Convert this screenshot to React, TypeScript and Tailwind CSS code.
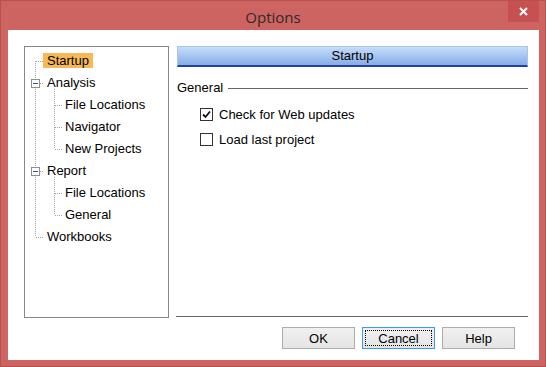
import React from "react";

const tree = [
  { label: "Startup", level: 0, selected: true },
  { label: "Analysis", level: 0 },
  { label: "File Locations", level: 1 },
  { label: "Navigator", level: 1 },
  { label: "New Projects", level: 1 },
  { label: "Report", level: 0 },
  { label: "File Locations", level: 1 },
  { label: "General", level: 1 },
  { label: "Workbooks", level: 0 },
];

function TreeLines() {
  const rowY = (i: number) => 14 + i * 22;
  const dots = "#a0a0a0";
  return (
    <svg className="absolute left-0 top-0 pointer-events-none" width="145" height="272">
      <g stroke={dots} strokeWidth="1" strokeDasharray="1 1" shapeRendering="crispEdges">
        {/* root spine */}
        <line x1="10.5" y1={rowY(0)} x2="10.5" y2={rowY(8)} />
        {[0, 8].map((i) => (
          <line key={i} x1="11" y1={rowY(i) + 0.5} x2="19" y2={rowY(i) + 0.5} />
        ))}
        {[1, 5].map((i) => (
          <line key={i} x1="15" y1={rowY(i) + 0.5} x2="19" y2={rowY(i) + 0.5} />
        ))}
        {/* children */}
        <line x1="29.5" y1={rowY(1) + 6} x2="29.5" y2={rowY(4)} />
        <line x1="29.5" y1={rowY(5) + 6} x2="29.5" y2={rowY(7)} />
        {[2, 3, 4, 6, 7].map((i) => (
          <line key={i} x1="30" y1={rowY(i) + 0.5} x2="38" y2={rowY(i) + 0.5} />
        ))}
      </g>
      {[1, 5].map((i) => (
        <g key={i} shapeRendering="crispEdges">
          <rect x="6.5" y={rowY(i) - 3.5} width="8" height="8" fill="#fff" stroke="#8e8f8f" />
          <line x1="8" y1={rowY(i) + 0.5} x2="13" y2={rowY(i) + 0.5} stroke="#2f5a8a" />
        </g>
      ))}
    </svg>
  );
}

function Checkbox({ checked, label }: { checked?: boolean; label: string }) {
  return (
    <div className="flex items-center h-[25px]">
      <div className="w-[13px] h-[13px] border border-[#333333] bg-white flex items-center justify-center">
        {checked && (
          <svg width="9" height="9" viewBox="0 0 9 9">
            <path d="M1 4.5 L3.5 7 L8 1.5" fill="none" stroke="#111" strokeWidth="1.8" />
          </svg>
        )}
      </div>
      <span className="ml-[6px]">{label}</span>
    </div>
  );
}

function DialogButton({ label, focused }: { label: string; focused?: boolean }) {
  return (
    <button
      className={
        "w-[73px] h-[22px] bg-gradient-to-b from-[#f0f0f0] to-[#e5e5e5] border p-[2px] flex " +
        (focused ? "border-[#3c9bf0]" : "border-[#acacac]")
      }
    >
      <span
        className={
          "flex-1 flex items-center justify-center leading-none " +
          (focused ? "border border-dotted border-black" : "border border-transparent")
        }
      >
        {label}
      </span>
    </button>
  );
}

export default function App() {
  return (
    <div
      className="w-[546px] h-[367px] bg-[#ce6461] border border-[#b5514e] flex flex-col text-[13px] text-black"
      style={{ fontFamily: '"Liberation Sans", Arial, sans-serif' }}
    >
      {/* Title bar */}
      <div className="h-[29px] flex items-start relative">
        <div
          className="flex-1 text-center text-[15px] text-[#2b2b2b] pt-[5px]"
          style={{ fontFamily: '"Open Sans", "Noto Sans", sans-serif' }}
        >
          Options
        </div>
        <div className="absolute right-[6px] top-0 w-[31px] h-[21px] bg-[#c75050] flex items-center justify-center">
          <svg width="9" height="9" viewBox="0 0 9 9">
            <path d="M1 1 L8 8 M8 1 L1 8" stroke="#fff" strokeWidth="2" />
          </svg>
        </div>
      </div>

      {/* Client area */}
      <div className="ml-[7px] mr-[6px] mb-[6px] flex-1 bg-white flex flex-col pt-[16px] pl-[16px] pr-[11px]">
        <div className="flex gap-[8px]">
          {/* Tree */}
          <div className="relative w-[145px] h-[272px] border border-[#828790] bg-white pt-[2px]">
            <TreeLines />
            {tree.map((item, i) => (
              <div
                key={i}
                className={"h-[22px] flex items-center " + (item.level === 0 ? "pl-[18px]" : "pl-[36px]")}
              >
                <span
                  className={
                    "px-[4px] h-[15px] leading-[15px] " + (item.selected ? "bg-[#f7b955]" : "")
                  }
                >
                  {item.label}
                </span>
              </div>
            ))}
          </div>

          {/* Right pane */}
          <div className="w-[351px] h-[272px] flex flex-col">
            <div className="h-[21px] border border-[#a7c3ee] border-b-2 border-b-[#23429f] bg-gradient-to-b from-[#c6ddfa] to-[#87ade7] flex items-center justify-center">
              Startup
            </div>
            <div className="flex items-center mt-[13px] h-[16px]">
              <span>General</span>
              <div className="flex-1 ml-[5px] h-px bg-[#646464]" />
            </div>
            <div className="pl-[23px] mt-[6px] flex flex-col">
              <Checkbox checked label="Check for Web updates" />
              <Checkbox label="Load last project" />
            </div>
            <div className="flex-1" />
            <div className="h-px bg-[#646464] mb-[1px] -ml-[1px]" />
          </div>
        </div>

        {/* Buttons */}
        <div className="flex justify-end gap-[7px] mt-[9px] pr-[13px]">
          <DialogButton label="OK" />
          <DialogButton label="Cancel" focused />
          <DialogButton label="Help" />
        </div>
      </div>
    </div>
  );
}
